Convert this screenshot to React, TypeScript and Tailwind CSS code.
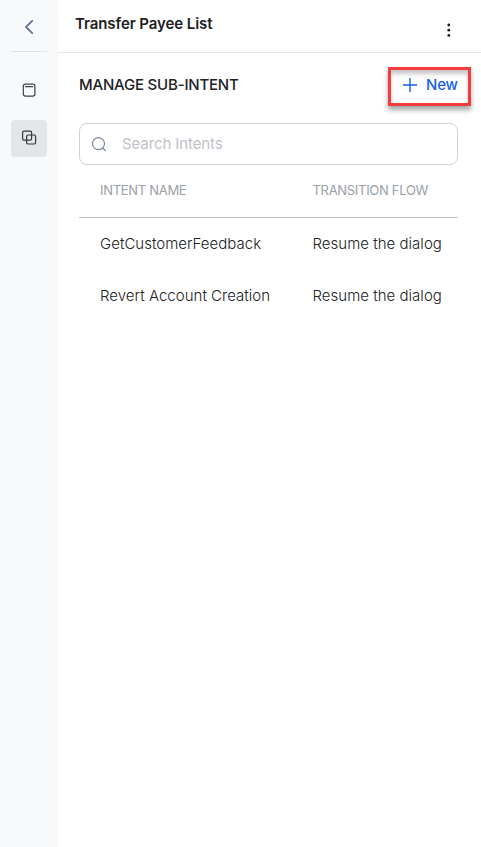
const intents = [
  { name: 'GetCustomerFeedback', flow: 'Resume the dialog' },
  { name: 'Revert Account Creation', flow: 'Resume the dialog' },
];

function Sidebar() {
  return (
    <aside className="flex w-[58px] shrink-0 flex-col items-center bg-[#f8f9fb]">
      <button className="box-content flex h-[51px] w-9 items-center justify-center border-b border-[#dfe1e4]" aria-label="Back">
        <svg width="20" height="20" viewBox="0 0 20 20" fill="none" stroke="#667394" strokeWidth="1.8" strokeLinecap="round" strokeLinejoin="round">
          <path d="M13.2 4.8L7 11L13.2 17.2" />
        </svg>
      </button>
      <button className="mt-5 flex h-9 w-9 items-center justify-center" aria-label="Dialog">
        <svg width="16" height="16" viewBox="0 0 16 16" fill="none" stroke="#3c3f45" strokeWidth="1.2" strokeLinecap="round">
          <rect x="2.3" y="2.2" width="11.6" height="11.9" rx="2" />
          <path d="M4.5 4.7H11.7" />
        </svg>
      </button>
      <button className="mt-3 flex h-[37px] w-9 items-center justify-center rounded-[4px] bg-[#e4e5e7]" aria-label="Sub-intents">
        <svg className="-mt-px" width="16" height="16" viewBox="0 0 16 16" fill="none" stroke="#35373c" strokeWidth="1.2">
          <rect x="1.6" y="1.1" width="9" height="9" rx="1.4" />
          <rect x="5.6" y="5" width="9" height="9" rx="1.4" />
        </svg>
      </button>
    </aside>
  );
}

export default function App() {
  return (
    <div className="flex h-[847px] w-[481px] overflow-hidden bg-white font-['Inter',sans-serif] text-[#202124]">
      <Sidebar />
      <main className="min-w-0 flex-1">
        <header className="flex h-[53px] justify-between border-b border-[#e4e5e7] pl-[17px] pr-[26px]">
          <h1 className="mt-3 text-[15px] leading-6 font-semibold tracking-[-0.08px]">Transfer Payee List</h1>
          <button className="mt-[22px] h-4" aria-label="More">
            <svg width="12" height="16" viewBox="0 0 12 16" fill="#111827">
              <circle cx="5.8" cy="3" r="1.4" />
              <circle cx="5.8" cy="8.2" r="1.4" />
              <circle cx="5.8" cy="13.4" r="1.4" />
            </svg>
          </button>
        </header>
        <section className="pl-[21px] pr-[10px]">
          <div className="flex justify-between pt-[14px]">
            <h2 className="mt-1.5 text-[15px] leading-6 font-medium tracking-[-0.2px]">MANAGE SUB-INTENT</h2>
            <button className="flex h-[39px] w-[83px] items-center border-3 border-[#f53b3b] pl-[11px] text-[15px] text-[#155eef] shadow-[0_4px_5px_rgba(0,0,0,0.35),inset_0_4px_4px_rgba(0,0,0,0.22)]">
              <svg className="mt-[-3px] shrink-0" width="16" height="16" viewBox="0 0 16 16" stroke="#155eef" strokeWidth="1.4">
                <path d="M8 1V15M1 8H15" />
              </svg>
              <span className="mt-[-3px] ml-2 font-[450] tracking-[-0.15px]">New</span>
            </button>
          </div>
          <div className="mr-[13px]">
            <label className="mt-[17px] flex h-[42px] items-center rounded-[8px] border border-[#d0d4df] pl-[11px]">
              <svg width="16" height="16" viewBox="0 0 16 16" fill="none" stroke="#7b87a5" strokeWidth="1.2" strokeLinecap="round">
                <circle cx="7.5" cy="7.6" r="6" />
                <path d="M11.8 12L14.3 14.5" />
              </svg>
              <input className="ml-[15px] w-64 text-[15px] tracking-[-0.1px] outline-none placeholder:text-[#bec2c8]" placeholder="Search Intents" />
            </label>
            <table className="w-full table-fixed border-separate border-spacing-0 text-left">
              <thead>
                <tr className="h-[53px] text-[13px] tracking-[-0.3px] text-[#9aa0a6]">
                  <th className="w-[212.5px] border-b border-[#bfc1c4] pl-[21px] font-normal">INTENT NAME</th>
                  <th className="border-b border-[#bfc1c4] pl-[21px] font-normal">TRANSITION FLOW</th>
                </tr>
              </thead>
              <tbody>
                {intents.map((intent) => (
                  <tr key={intent.name} className="h-[52px] text-[15px] font-light tracking-[0.02px]">
                    <td className="pl-[21px]">{intent.name}</td>
                    <td className="pl-[21px] whitespace-nowrap">{intent.flow}</td>
                  </tr>
                ))}
              </tbody>
            </table>
          </div>
        </section>
      </main>
    </div>
  );
}
